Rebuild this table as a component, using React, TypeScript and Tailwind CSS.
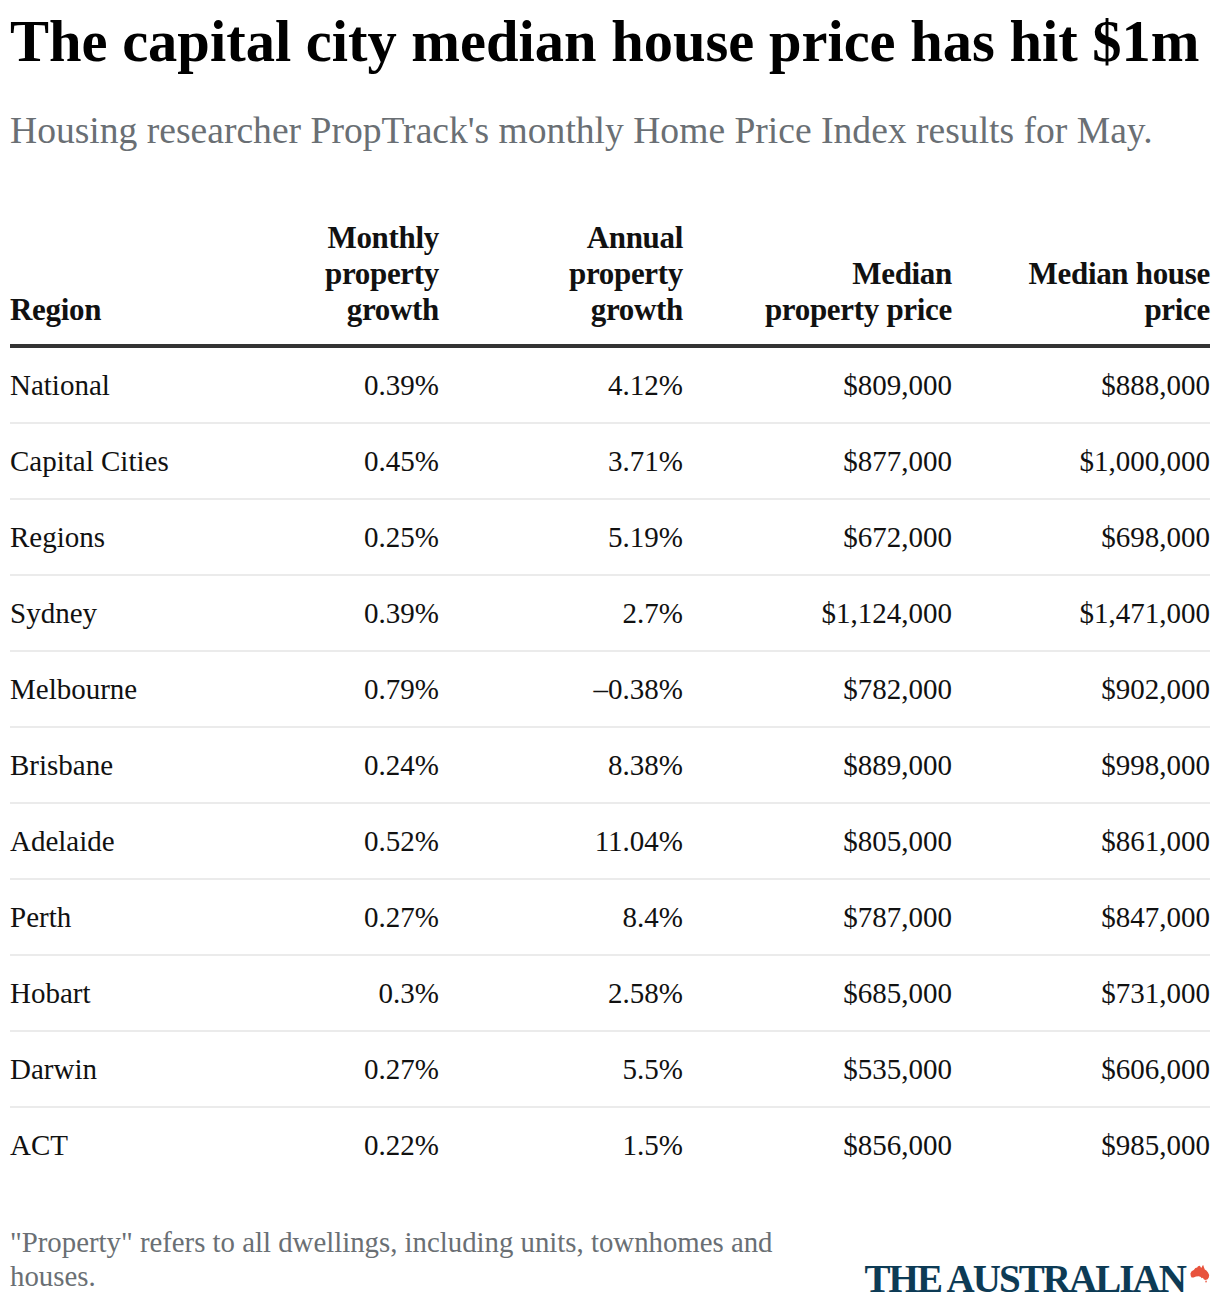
import React from 'react';

type Row = {
  region: string;
  monthly: string;
  annual: string;
  medianProperty: string;
  medianHouse: string;
};

const rows: Row[] = [
  { region: 'National', monthly: '0.39%', annual: '4.12%', medianProperty: '$809,000', medianHouse: '$888,000' },
  { region: 'Capital Cities', monthly: '0.45%', annual: '3.71%', medianProperty: '$877,000', medianHouse: '$1,000,000' },
  { region: 'Regions', monthly: '0.25%', annual: '5.19%', medianProperty: '$672,000', medianHouse: '$698,000' },
  { region: 'Sydney', monthly: '0.39%', annual: '2.7%', medianProperty: '$1,124,000', medianHouse: '$1,471,000' },
  { region: 'Melbourne', monthly: '0.79%', annual: '–0.38%', medianProperty: '$782,000', medianHouse: '$902,000' },
  { region: 'Brisbane', monthly: '0.24%', annual: '8.38%', medianProperty: '$889,000', medianHouse: '$998,000' },
  { region: 'Adelaide', monthly: '0.52%', annual: '11.04%', medianProperty: '$805,000', medianHouse: '$861,000' },
  { region: 'Perth', monthly: '0.27%', annual: '8.4%', medianProperty: '$787,000', medianHouse: '$847,000' },
  { region: 'Hobart', monthly: '0.3%', annual: '2.58%', medianProperty: '$685,000', medianHouse: '$731,000' },
  { region: 'Darwin', monthly: '0.27%', annual: '5.5%', medianProperty: '$535,000', medianHouse: '$606,000' },
  { region: 'ACT', monthly: '0.22%', annual: '1.5%', medianProperty: '$856,000', medianHouse: '$985,000' },
];

function AustraliaMark() {
  return (
    <svg viewBox="0 0 100 90" className="w-[20px] h-[18px]" aria-hidden="true">
      <path
        fill="#e8533d"
        d="M2 42 L8 31 L19 25 L27 15 L36 13 L40 6 L50 4 L53 11 L58 14 L62 4 L66 0 L70 12 L74 22 L82 28 L90 38 L96 50 L94 62 L88 71 L78 75 L70 72 L64 64 L58 66 L54 60 L44 56 L30 58 L18 62 L8 63 L4 55 Z M76 79 L85 79 L82 88 L78 88 Z"
      />
    </svg>
  );
}

const headBase = 'pb-[16px] align-bottom text-[31px] leading-[36px] font-bold tracking-[-0.01em]';
const headCell = `${headBase} text-right`;
const headFirst = `${headBase} text-left`;
const bodyBase = 'py-[19px] text-[29px] leading-[36px]';
const bodyCell = `${bodyBase} text-right`;
const bodyFirst = `${bodyBase} text-left`;

export default function App() {
  return (
    <div className="w-[1220px] min-h-[1304px] bg-white px-[10px] font-['Liberation_Serif','Times_New_Roman',serif] text-[#111]">
      {/* Heading */}
      <h1 className="pt-[10px] text-[58.5px] leading-[64px] font-bold text-black whitespace-nowrap">
        The capital city median house price has hit $1m
      </h1>
      <p className="mt-[35px] text-[37.6px] leading-[44px] text-[#6a6f74] whitespace-nowrap">
        Housing researcher PropTrack's monthly Home Price Index results for May.
      </p>

      {/* Table */}
      <table className="mt-[67px] w-[1200px] table-fixed border-collapse">
        <colgroup>
          <col className="w-[270px]" />
          <col className="w-[159px]" />
          <col className="w-[244px]" />
          <col className="w-[269px]" />
          <col className="w-[258px]" />
        </colgroup>
        <thead>
          <tr className="border-b-4 border-[#333]">
            <th className={headFirst}>Region</th>
            <th className={headCell}>
              Monthly<br />property<br />growth
            </th>
            <th className={headCell}>
              Annual<br />property<br />growth
            </th>
            <th className={headCell}>
              Median<br />property price
            </th>
            <th className={headCell}>
              Median house<br />price
            </th>
          </tr>
        </thead>
        <tbody>
          {rows.map((row, i) => (
            <tr
              key={row.region}
              className={i < rows.length - 1 ? 'border-b-2 border-[#ebebeb]' : ''}
            >
              <td className={bodyFirst}>{row.region}</td>
              <td className={bodyCell}>{row.monthly}</td>
              <td className={bodyCell}>{row.annual}</td>
              <td className={bodyCell}>{row.medianProperty}</td>
              <td className={bodyCell}>{row.medianHouse}</td>
            </tr>
          ))}
        </tbody>
      </table>

      {/* Footer */}
      <div className="mt-[43px] flex items-end justify-between">
        <p className="w-[800px] text-[28.8px] leading-[34px] text-[#6a6f74]">
          "Property" refers to all dwellings, including units, townhomes and houses.
        </p>
        <div className="flex items-start gap-[5px]">
          <span className="text-[39px] leading-[28px] font-bold tracking-[-0.05em] text-[#0d3b55]">
            THE AUSTRALIAN
          </span>
          <AustraliaMark />
        </div>
      </div>
    </div>
  );
}
